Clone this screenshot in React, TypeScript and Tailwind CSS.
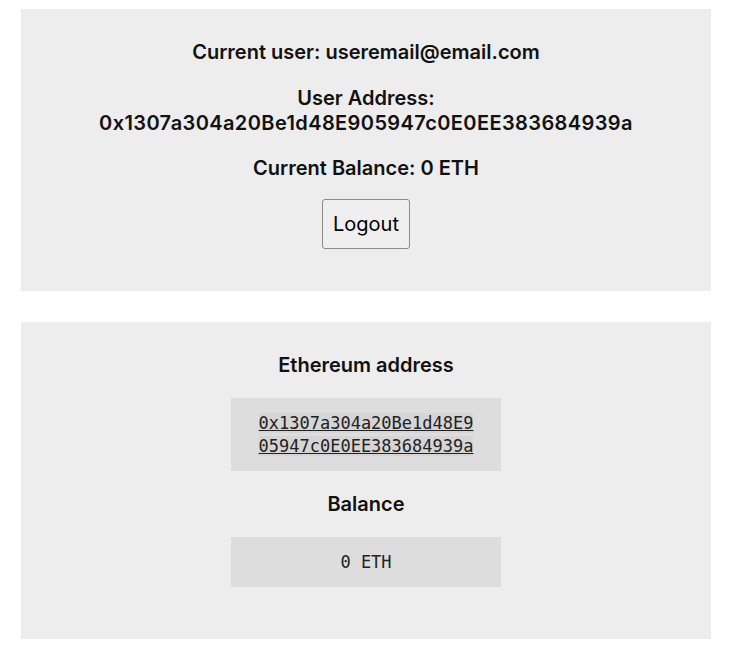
import React from 'react';

const sans = { fontFamily: 'Inter, "Noto Sans", sans-serif' };
const mono = { fontFamily: '"DejaVu Sans Mono", "Liberation Mono", monospace' };

const Panel: React.FC<{ className?: string; children: React.ReactNode }> = ({ className = '', children }) => (
  <div className={`ml-[21px] w-[690px] bg-[#ededed] flex flex-col items-center text-[#111] ${className}`}>
    {children}
  </div>
);

const App: React.FC = () => {
  const address = '0x1307a304a20Be1d48E905947c0E0EE383684939a';

  return (
    <div className="w-[730px] h-[652px] bg-white pt-[9px]" style={sans}>
      <Panel className="pt-[31px] pb-[42px]">
        <h2 className="text-[20px] leading-[24px] font-semibold">Current user: useremail@email.com</h2>
        <h2 className="mt-[22px] text-[20px] leading-[25px] font-semibold text-center">
          User Address:
          <br />
          <span className="tracking-[0.4px]">{address}</span>
        </h2>
        <h2 className="mt-[20px] text-[20px] leading-[24px] font-semibold">Current Balance: 0 ETH</h2>
        <button className="mt-[19px] w-[88px] h-[50px] border border-[#8a8a8a] rounded-[3px] bg-[#efefef] text-[20px] text-black">
          Logout
        </button>
      </Panel>

      <Panel className="mt-[31px] pt-[31px] pb-[52px]">
        <h3 className="text-[20px] leading-[24px] font-semibold">Ethereum address</h3>
        <div className="mt-[21px] w-[270px] bg-[#dddddd] pt-[14px] pb-[13px] text-center text-[17px] leading-[23px] text-[#222] whitespace-nowrap" style={mono}>
          <a href="#" className="underline bg-[#d5d5d5]">
            {address.slice(0, 21)}
            <br />
            {address.slice(21)}
          </a>
        </div>
        <h3 className="mt-[21px] text-[20px] leading-[24px] font-semibold">Balance</h3>
        <div className="mt-[21px] w-[270px] bg-[#dddddd] py-[13px] text-center text-[17px] leading-[24px] text-[#222]" style={mono}>
          0 ETH
        </div>
      </Panel>
    </div>
  );
};

export default App;
